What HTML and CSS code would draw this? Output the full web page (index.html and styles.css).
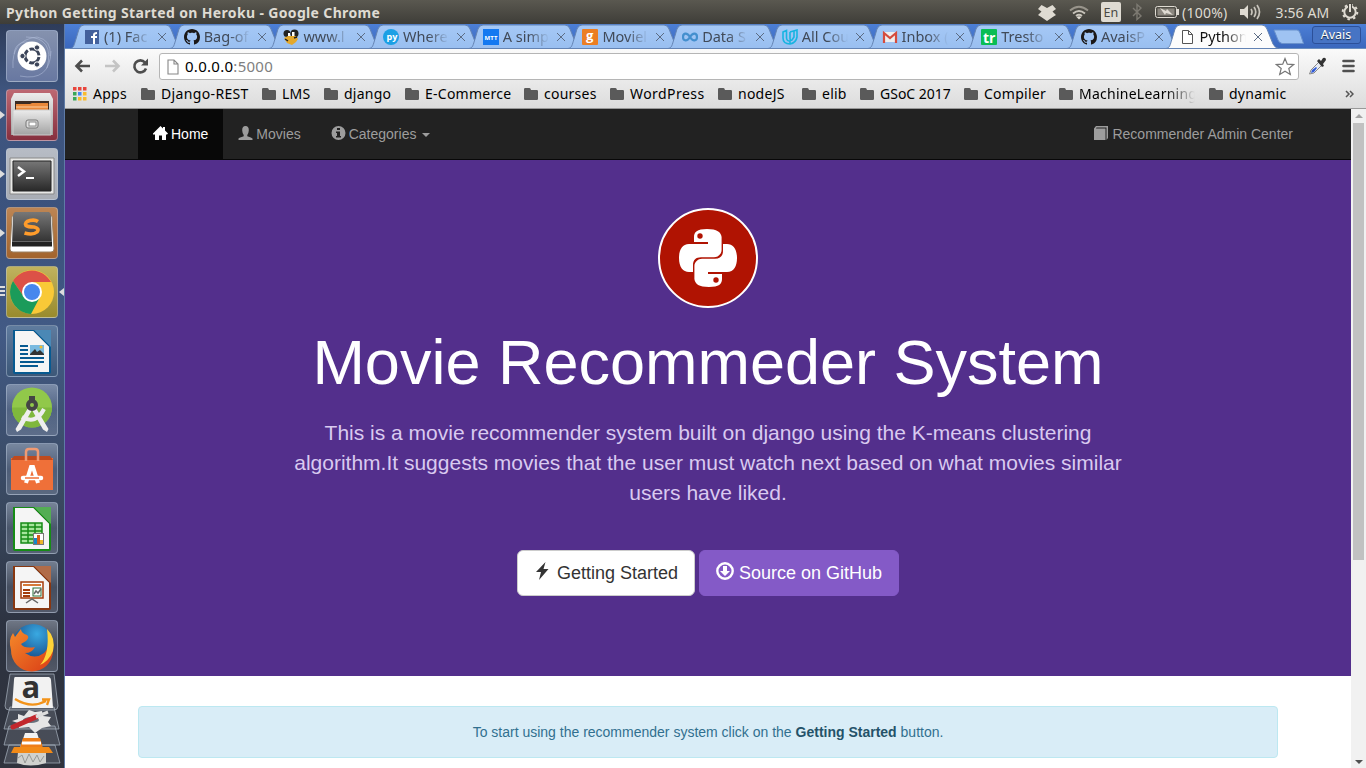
FILE: index.html
```html
<!DOCTYPE html>
<html lang="en">
<head>
<meta charset="utf-8">
<title>Python Getting Started on Heroku</title>
<link rel="stylesheet" href="styles.css">
</head>
<body>
<svg class="defs" width="0" height="0">
  <defs>
    <linearGradient id="tabfill" x2="0" y2="1"><stop offset="0" stop-color="#a5c8f6"/><stop offset="1" stop-color="#99bff0"/></linearGradient>
    <linearGradient id="silver" x2="0" y2="1"><stop offset="0" stop-color="#ececec"/><stop offset="1" stop-color="#a2a2a2"/></linearGradient>
    <linearGradient id="dark" x2="0" y2="1"><stop offset="0" stop-color="#777"/><stop offset="1" stop-color="#292929"/></linearGradient>
    <radialGradient id="globe" cx=".6" cy=".25" r=".8"><stop offset="0" stop-color="#39a9e2"/><stop offset="1" stop-color="#113a78"/></radialGradient>
    <linearGradient id="fox" x2="1" y2="1"><stop offset="0" stop-color="#f58a2a"/><stop offset="1" stop-color="#d93c16"/></linearGradient>
    <symbol id="tabshape" viewBox="0 0 113 25"><path d="M0 24.5 C4 24 4 21 6 15 L9 5 Q10.500 1 14 1 H96 Q99.500 1 101 5 L107 20 Q109 24 113 24.500Z"/></symbol>
    <symbol id="folder" viewBox="0 0 14 12"><path fill="#5a5a5a" d="M0 1.200Q0 0 1.200 0H5.500Q6.500 0 7 2H12.800Q14 2 14 3.200V10.800Q14 12 12.800 12H1.200Q0 12 0 10.800Z"/></symbol>
    <symbol id="github" viewBox="0 0 16 16"><path fill="#1b1817" d="M8 0C3.580 0 0 3.580 0 8c0 3.540 2.290 6.530 5.470 7.590.4.070.55-.17.55-.38 0-.19-.01-.82-.01-1.490-2.010.37-2.530-.49-2.690-.94-.09-.23-.48-.94-.82-1.130-.28-.15-.68-.52-.01-.53.63-.01 1.080.58 1.230.82.720 1.210 1.870.87 2.330.66.070-.52.280-.87.510-1.070-1.780-.2-3.640-.89-3.640-3.950 0-.87.310-1.590.82-2.150-.08-.2-.36-1.020.08-2.120 0 0 .67-.21 2.200.82.640-.18 1.320-.27 2-.27s1.360.09 2 .27c1.530-1.040 2.200-.82 2.200-.82.440 1.100.160 1.920.080 2.120.510.560.820 1.270.820 2.150 0 3.070-1.870 3.750-3.650 3.950.290.250.540.730.540 1.480 0 1.070-.01 1.930-.01 2.200 0 .21.150.46.550.38A8.010 8.010 0 0 0 16 8c0-4.420-3.580-8-8-8z"/></symbol>
    <symbol id="page" viewBox="0 0 12 16"><path fill="#fff" stroke="#888" stroke-width="1.100" d="M1 1H7L11 5V15H1ZM7 1V5H11"/></symbol>
    <symbol id="pysnake" viewBox="0 0 58 58"><path fill="#fff" d="M28 0C18 0 15 3 15 8V13H29V15H10C3 15 0 21 0 29C0 38 4 43 10 43H14V36C14 31 17 28.300 22 28.300H35C39 28.300 42.600 25 42.600 21V8C42 3 38 0 28 0Z"/><circle cx="21" cy="7" r="2.700" fill="#b01302"/></symbol>
  </defs>
</svg>

<header class="panel">
  <span class="panel-title">Python Getting Started on Heroku - Google Chrome</span>
  <svg class="indicators" width="144" height="24" fill="#dfdbd2">
    <path d="M4.500 5 10 8l5.500-3L19 9l-3.500 2.500L19 15l-2.500 1.500L10 21l-6.500-4.500L1 15l3.500-3.500L1 9Z"/>
    <g fill="none" stroke="#c8c4bb" stroke-width="1.800"><path d="M33 10.500Q42 3 51 10.500" stroke="#98948b"/><path d="M36 13.500Q42 8.500 48 13.500M39 16Q42 13.500 45 16"/></g><path d="M42 19.500 39.500 17Q42 15.500 44.500 17Z"/>
    <rect x="64" y="2" width="20" height="20" rx="2"/>
    <path d="M96 8l8 8-4 3.500V4.500L104 8l-8 8" fill="none" stroke="#7d7a72" stroke-width="1.400"/>
    <rect x="118.500" y="6.500" width="21" height="11" rx="2" fill="none" stroke="#dfdbd2"/><rect x="120.500" y="8.500" width="17" height="7" fill="#8b877f"/><path d="M140 9h2v6h-2z"/><path d="M123 8l6 3 1-2 6 6-7-2-1 2Z"/>
    <text x="66.500" y="17" class="lang">En</text>
  </svg>
  <span class="battery">(100%)</span>
  <svg class="volume" width="21" height="16" fill="#dfdbd2"><path d="M0 5H4L8 1V15L4 11H0Z"/><path fill="none" stroke="#c8c4bb" stroke-width="1.700" d="M11 5Q13 8 11 11M14 3Q17.500 8 14 13M17 1Q22 8 17 15"/></svg>
  <span class="clock">3:56 AM</span>
  <svg class="gear" width="18" height="18" viewBox="-9 -9 18 18"><circle r="5.700" fill="none" stroke="#dfdbd2" stroke-width="2"/><circle r="7.300" fill="none" stroke="#dfdbd2" stroke-width="2" stroke-dasharray="2.500 3.230"/><path d="M-2-9H2V0H-2Z" fill="#4a4842"/><path d="M0-8V0" stroke="#dfdbd2" stroke-width="2"/></svg>
</header>

<div class="desktop">
  <aside class="launcher">
    <div class="tile dash"><svg viewBox="0 0 52 52"><g fill="none" stroke="#b8c4df" stroke-opacity=".5"><path d="M7 38Q5 10 31 7Q46 10 44 26M14 46Q44 52 45 21M8 24Q10 7 32 14M20 7Q49 7 41 38"/></g><circle cx="26" cy="26" r="14.500" fill="#fff"/><circle cx="26" cy="26" r="7" fill="none" stroke="#3b4459" stroke-width="3" stroke-dasharray="12.660 2" stroke-dashoffset="-1"/><g fill="#3b4459" stroke="#fff"><circle cx="16.500" cy="26" r="2.700"/><circle cx="31" cy="17.500" r="2.700"/><circle cx="31" cy="34.500" r="2.700"/></g></svg></div>
    <div class="tile files"><i class="run"></i><svg viewBox="0 0 52 52"><path d="M8 4H44L47 10V46H5V10Z" fill="url(#silver)"/><path d="M9 12H43V24H9Z" fill="#3c2b22"/><path d="M10 15H24L26 14H42V24H10Z" fill="#e9883a"/><path d="M10 18H42" stroke="#ffd0a0"/><path d="M7 21H45V46H7Z" fill="url(#silver)" stroke="#ccc"/><rect x="20" y="31" width="12" height="8" rx="2" fill="#ddd" stroke="#777"/><rect x="23" y="33" width="7" height="4" fill="#fff" stroke="#888"/></svg></div>
    <div class="tile term"><i class="run"></i><svg viewBox="0 0 52 52"><path d="M4 10H48V46H4Z" fill="#e8e8e6" stroke="#888"/><path d="M7 13H45V43H7Z" fill="url(#dark)" stroke="#222"/><path d="M12 19 18 23.500 12 28" fill="none" stroke="#fff" stroke-width="2.500"/><path d="M20 30H28" stroke="#fff" stroke-width="2"/></svg></div>
    <div class="tile sublime"><i class="run"></i><svg viewBox="0 0 52 52"><path d="M6 9 4 42Q4 45 7 45H45Q48 45 48 42L46 9Z" fill="#fff" stroke="#9b8163"/><path d="M9 5H43Q45 6 45 9L46 39H6L7 9Q7 6 9 5Z" fill="url(#dark)"/><path d="M6 34.500H46V39.500H6Z" fill="#222"/><path d="M6 34.500H46" stroke="#666"/><path d="M32 14.500Q29 12.500 24 13.500Q18 15 20 18.500Q22 20 28 20Q34 21.500 31 25Q27 28.500 18.500 26" fill="none" stroke="#ff9c2b" stroke-width="3.600"/></svg></div>
    <div class="tile chrome"><i class="run multi"></i><i class="focus"></i><svg viewBox="0 0 52 52"><circle cx="26" cy="26" r="22" fill="#f9c937"/><path d="M7 15A22 22 0 0 1 45 16H26L18 31Z" fill="#dc5147"/><path d="M7 15A22 22 0 0 0 25 48L34 31 26 35 18 31Z" fill="#1b9b5a"/><circle cx="26" cy="26" r="10" fill="#fff"/><circle cx="26" cy="26" r="8" fill="#4787ed"/></svg></div>
    <div class="tile office"><svg viewBox="0 0 52 52"><path d="M7 5H45V47Q45 49 43 49H9Q7 49 7 47Z" fill="#075a91"/><path d="M28 5H45V22Z" fill="#4b88b5"/><path d="M9 6H27L43 22V47H9Z" fill="#f5f5f5"/><path d="M27 6V6L43 22Z" fill="#ccc" stroke="#ccc"/><path d="M14 21H22M14 25H22M14 29H22M14 33H38M14 37H38M14 41H32" stroke="#075a91" stroke-width="2"/><rect x="24" y="20" width="14" height="10" fill="#79bae0"/><path d="M24 29 29 24 31 27 34 25 38 29V30H24Z" fill="#333"/><circle cx="35" cy="22" r="1.500" fill="#f5bd29"/></svg></div>
    <div class="tile"><svg viewBox="0 0 52 52"><circle cx="26" cy="23.500" r="20" fill="#91c84a"/><path d="M6 23.500A20 20 0 0 0 46 23.500Z" fill="#7fb83c"/><path d="M22 24 9.500 45 11 48 15 45.500 26 26M30 24 42.500 45 41 48 37 45.500 26 26" fill="#eee"/><path d="M16 33Q30 41 38 25" fill="none" stroke="#eee" stroke-width="4"/><rect x="23" y="12" width="6" height="7" fill="#444"/><circle cx="26" cy="21" r="4" fill="none" stroke="#444" stroke-width="4"/></svg></div>
    <div class="tile"><svg viewBox="0 0 52 52"><path d="M5 15H47V47H5Z" fill="#ef7039"/><path d="M5 17 8 13H44L47 17Z" fill="#bf4a1e"/><path d="M20 18V9Q20 6 23 6H29Q32 6 32 9V18" fill="none" stroke="#f09a73" stroke-width="2.500"/><path d="M20 40 25 24H27L32 40" fill="none" stroke="#fff" stroke-width="4"/><path d="M17 35H35" stroke="#fff" stroke-width="4.500" stroke-linecap="round"/><path d="M19 35H33" stroke="#ef7039" stroke-width="1.500"/></svg></div>
    <div class="tile"><svg viewBox="0 0 52 52"><path d="M7 5H45V47Q45 49 43 49H9Q7 49 7 47Z" fill="#168b16"/><path d="M28 5H45V22Z" fill="#54ad54"/><path d="M9 6H27L43 22V47H9Z" fill="#f5f5f5"/><path d="M27 6V6L43 22Z" fill="#ccc" stroke="#ccc"/><path d="M15 21H36V41H15Z" fill="#a6e59c" stroke="#168b16" stroke-width="1.500"/><path d="M15 25H36M15 29H36M15 33H36M15 37H36M22 21V41M29 21V41" stroke="#168b16" stroke-width="1.500"/><rect x="27.500" y="31.500" width="10" height="11" fill="#fff" stroke="#777"/><path d="M29.500 42V36" stroke="#1686c8" stroke-width="3"/><path d="M32.500 42V33" stroke="#d45f1c" stroke-width="3"/><path d="M35.500 42V38" stroke="#edb72b" stroke-width="3"/></svg></div>
    <div class="tile"><svg viewBox="0 0 52 52"><path d="M7 5H45V47Q45 49 43 49H9Q7 49 7 47Z" fill="#883711"/><path d="M28 5H45V22Z" fill="#b16c48"/><path d="M9 6H27L43 22V47H9Z" fill="#f5f5f5"/><path d="M27 6V6L43 22Z" fill="#ccc" stroke="#ccc"/><rect x="15" y="21" width="22" height="16" fill="#fff" stroke="#a43c0b" stroke-width="1.500"/><path d="M17 24H35" stroke="#d67a3a" stroke-width="2"/><path d="M17 29H24M17 32H24M17 35H24" stroke="#a43c0b" stroke-width="2"/><rect x="27" y="27" width="8" height="8" fill="#fff" stroke="#286f39"/><path d="M28 33 30 30 32 32 35 28M20 42 26 38 32 42" fill="none" stroke="#666" stroke-width="1.500"/></svg></div>
    <div class="tile"><svg viewBox="0 0 52 52"><circle cx="27" cy="24" r="20" fill="url(#globe)"/><path d="M7 13 9 17 15 9Q15 13 21 15Q24 17 20 21L15 24Q18 29 29 27Q26 33 19 33Q29 40 38 33Q44 28 42 15Q49 24 47 31A21 21 0 0 1 5 30Q2 20 7 13Z" fill="url(#fox)"/><path d="M41 9Q50 18 47 31Q43 41 34 45Q44 34 41 9Z" fill="#ffd338"/></svg></div>
    <svg class="stack" width="65" height="96" viewBox="0 0 65 96"><g fill="#b8c0ce" fill-opacity=".18" stroke="#aab3c0" stroke-opacity=".7"><path d="M10 2H54L58 34Q58 38 54 38H9Q5 38 5 34Z"/><path d="M10 35H54L59 57H4Z"/><path d="M9 54H55L60 73H4Z"/><path d="M9 73H55L60 91H4Z"/></g><path d="M12 49 18 47V42L24 44 29 38 35 40 42 39 43 44 51 45 48 50 51 54 42 56 35 61 29 55 19 56 18 51Z" fill="#e6e6e6"/><ellipse cx="31" cy="48" rx="8" ry="3" fill="#67707b"/><path d="M15 5H49Q51 6 51 8L53 36H12L14 8Q14 5 15 5Z" fill="#f2f2f2"/><text x="21.500" y="26" class="amazon">a</text><path d="M15 27Q31 37 46 29M42 27.500H49L47 33" fill="none" stroke="#f39319" stroke-width="2.300"/><path d="M13 55 36 45" stroke="#c2272d" stroke-width="5" stroke-linecap="round"/><path d="M36 45 48 40" stroke="#ddd" stroke-width="3"/><path d="M25 61H37L42 76H20Z" fill="#f2f2f2"/><path d="M23 66H40L43 76H20Z" fill="#ef7e17"/><path d="M22 71H41" stroke="#fff" stroke-width="3"/><path d="M18 80H46V91Q30 96 17 91Z" fill="#d0d1ce"/><path d="M18 86 22 83 25 91 29 82 33 90 37 83 40 90 44 84" fill="none" stroke="#969996"/><path d="M14 75H49L53 81H11Z" fill="#f28a17"/></svg>
  </aside>

  <main class="window">
    <div class="tabs">
      <div class="tab"><svg class="shape"><use href="#tabshape"/></svg><svg class="fav" viewBox="0 0 16 16"><path fill="#43609c" d="M1 1H15V15H1Z"/><path d="M9 15V9H7V7H9V6Q9 3 13 3V5Q11 5 11 6V7H13V9H11V15Z" fill="#fff"/></svg><span>(1) Fac</span><b></b></div>
      <div class="tab"><svg class="shape"><use href="#tabshape"/></svg><svg class="fav"><use href="#github"/></svg><span>Bag-of</span><b></b></div>
      <div class="tab"><svg class="shape"><use href="#tabshape"/></svg><svg class="fav" viewBox="0 0 16 16"><circle cx="4" cy="4.500" r="3.500" fill="#222"/><circle cx="11.500" cy="4.500" r="4" fill="#222"/><path d="M1 9 5 7H13L15 10 13 13 9 16 4 14Z" fill="#e4a82c"/><path d="M5 4H7V7H5ZM9 3H11.500V7H9Z" fill="#fff"/><path d="M2 10 5 12M11 9 14 8" stroke="#222" stroke-width="1.500"/></svg><span>www.l</span><b></b></div>
      <div class="tab"><svg class="shape"><use href="#tabshape"/></svg><svg class="fav" viewBox="0 0 16 16"><circle cx="8" cy="8" r="8" fill="#1ba0e5"/><text x="3.500" y="10.500" class="favtext" font-size="9">py</text></svg><span>Where</span><b></b></div>
      <div class="tab"><svg class="shape"><use href="#tabshape"/></svg><svg class="fav" viewBox="0 0 16 16"><path d="M0 0H16V16H0Z" fill="#1479f1"/><text x="1.500" y="10.500" class="favtext" font-size="6" textLength="13">MTT</text></svg><span>A simp</span><b></b></div>
      <div class="tab"><svg class="shape"><use href="#tabshape"/></svg><svg class="fav" viewBox="0 0 16 16"><rect width="16" height="16" rx="1" fill="#eb7e23"/><text x="4" y="11" class="favtext" font-size="13">g</text></svg><span>Moviel</span><b></b></div>
      <div class="tab"><svg class="shape"><use href="#tabshape"/></svg><svg class="fav" viewBox="0 0 16 16"><path d="M8 8C5 3 1 4 1 8S5 13 8 8S15 4 15 8S11 13 8 8Z" fill="none" stroke="#448fce" stroke-width="2.200"/></svg><span>Data S</span><b></b></div>
      <div class="tab"><svg class="shape"><use href="#tabshape"/></svg><svg class="fav" viewBox="0 0 16 16"><path d="M1 3 4.500 1.500V9Q5 12.500 8 12V15Q1 15 1 9ZM8 3 15 1V8Q14 14 8 15M8 3V9Q8 12 10 11L12 8V2" fill="none" stroke="#18b4e1" stroke-width="1.600"/></svg><span>All Cou</span><b></b></div>
      <div class="tab"><svg class="shape"><use href="#tabshape"/></svg><svg class="fav" viewBox="0 0 16 16"><path d="M1 3H15V13H1Z" fill="#eee"/><path d="M2 14V4L8 9 14 4V14" fill="none" stroke="#d54b3d" stroke-width="2.200"/></svg><span>Inbox (</span><b></b></div>
      <div class="tab"><svg class="shape"><use href="#tabshape"/></svg><svg class="fav" viewBox="0 0 16 16"><rect width="16" height="16" rx="1" fill="#09bd55"/><text x="2" y="13.500" class="favtext" font-size="14">tr</text></svg><span>Tresto</span><b></b></div>
      <div class="tab"><svg class="shape"><use href="#tabshape"/></svg><svg class="fav"><use href="#github"/></svg><span>AvaisP</span><b></b></div>
      <div class="tab active"><svg class="shape"><use href="#tabshape"/></svg><svg class="fav" viewBox="0 0 16 16"><path fill="#fff" stroke="#555" d="M2.500 1.500H8.500L12.500 5.500V14.500H2.500ZM8.500 1.500V5.500H12.500"/></svg><span>Python</span><b></b></div>
      <svg class="newtab" width="32" height="16"><path d="M1 1H24Q26 1 27 4L30.500 14.500H9Q6 14 5 11Z" fill="#9fc3f2" stroke="#6991cc"/></svg>
      <div class="user">Avais</div>
    </div>

    <div class="toolbar">
      <div class="address-row">
        <svg width="80" height="20" viewBox="0 0 80 20" fill="none" stroke-width="2.600"><path d="M17 10H4M9 4.500 3.500 10 9 15.500" stroke="#4d4d4d"/><path d="M32 10H45M40 4.500 45.500 10 40 15.500" stroke="#c4c4c4"/><path d="M72 6.500A6 6 0 1 0 73 12.500" stroke="#4d4d4d"/><path d="M75 2.500V9.500H68Z" fill="#4d4d4d"/></svg>
        <div class="omnibox"><svg width="12" height="16"><use href="#page"/></svg><span class="url">0.0.0.0<em>:5000</em></span><svg class="star" width="20" height="19" viewBox="0 0 20 19"><path d="M10 1.500 12.300 7.200 18.500 7.600 13.800 11.500 15.300 17.500 10 14.200 4.700 17.500 6.200 11.500 1.500 7.600 7.700 7.200Z" fill="#fff" stroke="#777" stroke-width="1.200"/></svg></div>
        <svg class="dropper" width="19" height="19"><path d="M1.500 17 3 13 11 5 14 8 6 16Z" fill="#e8ecf5" stroke="#888"/><path d="M3 16 4 13 8 10 9 11 6 15Z" fill="#315bd6"/><path d="M9 4 11 2 13 4 15 1Q18 0 18 3L15 7 16 9 14 10Z" fill="#333"/></svg>
        <svg width="13" height="14"><path d="M1.500 2H11.500M1.500 7H11.500M1.500 12H11.500" stroke="#505050" stroke-width="2.600" stroke-linecap="round"/></svg>
      </div>
      <nav class="bookmarks">
        <a class="bm w-apps"><svg width="14" height="14"><path d="M0 0H3.500V3.500H0ZM5 0H8.500V3.500H5ZM10 0H13.500V3.500H10Z" fill="#e8453c"/><path d="M0 5H3.500V8.500H0ZM0 10H3.500V13.500H0Z" fill="#3aa757"/><path d="M5 5H8.500V8.500H5Z" fill="#4688f1"/><path d="M10 5H13.500V8.500H10ZM5 10H8.500V13.500H5ZM10 10H13.500V13.500H10Z" fill="#f9bb2d"/></svg>Apps</a>
        <a class="bm w-rest"><svg><use href="#folder"/></svg>Django-REST</a>
        <a class="bm w-lms"><svg><use href="#folder"/></svg>LMS</a>
        <a class="bm w-django"><svg><use href="#folder"/></svg>django</a>
        <a class="bm w-ecom"><svg><use href="#folder"/></svg>E-Commerce</a>
        <a class="bm w-courses"><svg><use href="#folder"/></svg>courses</a>
        <a class="bm w-wp"><svg><use href="#folder"/></svg>WordPress</a>
        <a class="bm w-node"><svg><use href="#folder"/></svg>nodeJS</a>
        <a class="bm w-elib"><svg><use href="#folder"/></svg>elib</a>
        <a class="bm w-gsoc"><svg><use href="#folder"/></svg>GSoC 2017</a>
        <a class="bm w-comp"><svg><use href="#folder"/></svg>Compiler</a>
        <a class="bm w-ml"><svg><use href="#folder"/></svg><span>MachineLearning</span></a>
        <a class="bm w-dyn"><svg><use href="#folder"/></svg>dynamic</a>
        <svg class="more" width="9" height="8"><path d="M1 1 4 4 1 7M5 1 8 4 5 7" fill="none" stroke="#555" stroke-width="1.500"/></svg>
      </nav>
    </div>

    <div class="viewport">
      <div class="site">
        <nav class="navbar">
          <a class="current"><svg width="15" height="14"><path d="M7.500 0 10 2.500V1H12V4.500L15 7.500 14 8.500H13V14H9V9.500H6V14H2V8.500H0V7.500Z" fill="#fff"/></svg>Home</a>
          <a><svg width="15" height="14"><path d="M7.500 0Q11 0 10.800 4.500Q10.500 8 9.300 9V10.200Q13.700 11.500 14.500 12.500V14H.5V12.500Q1.300 11.500 5.700 10.200V9Q4.500 8 4.200 4.500Q4 0 7.500 0Z"/></svg>Movies</a>
          <a><svg width="15" height="14"><path fill-rule="evenodd" d="M7.500 0A7 7 0 1 0 7.500 14A7 7 0 1 0 7.500 0ZM6 2H9V4H6ZM5 5.500H9V10H10V11.500H5V10H6V7H5Z"/></svg>Categories<i class="caret"></i></a>
          <a class="admin"><svg width="15" height="14"><path d="M0 2.500 2 0H14V12L12.500 14V1.500H2.500L2 2.500H11.500V14H0Z"/></svg>Recommender Admin Center</a>
        </nav>
        <section class="hero">
          <div class="logo"><svg width="58" height="58" viewBox="0 0 58 58"><use href="#pysnake"/><g transform="rotate(180 29 29)"><use href="#pysnake"/></g></svg></div>
          <h1>Movie Recommeder System</h1>
          <p>This is a movie recommender system built on django using the K-means clustering algorithm.It suggests movies that the user must watch next based on what movies similar users have liked.</p>
          <div class="actions">
            <a class="btn light"><svg width="18" height="18"><path d="M11.500 0 2 10H7L5 18 14.500 7H9.500Z" fill="#333"/></svg>Getting Started</a>
            <a class="btn purple"><svg width="18" height="18"><circle cx="9" cy="9" r="7.700" fill="none" stroke="#fff" stroke-width="2.400"/><path d="M7 4H11V9H14L9 14 4 9H7Z" fill="#fff"/></svg>Source on GitHub</a>
          </div>
        </section>
        <div class="notice">To start using the recommender system click on the <strong>Getting Started</strong> button.</div>
      </div>
      <div class="scrollbar"><i class="up"></i><div class="thumb"></div><i class="down"></i></div>
    </div>
  </main>
</div>
</body>
</html>
```
FILE: styles.css
```css
* { box-sizing: border-box; }
body { margin: 0; width: 1366px; height: 768px; overflow: hidden; font-family: "Noto Sans", sans-serif; background: #fff; }
.defs { position: absolute; }
svg { flex: none; display: block; }

.panel { height: 24px; display: flex; align-items: center; padding: 0 7px 0 6px; background: linear-gradient(#5a5850, #3e3d38); color: #dfdbd2; font-size: 14px; white-space: nowrap; }
.panel-title { font-weight: bold; font-size: 14px; letter-spacing: .35px; width: 1031px; flex: none; }
.indicators { margin-right: 1px; }
.lang { font-size: 12.500px; fill: #4a4842; }
.battery { width: 58px; letter-spacing: .25px; }
.volume { margin-right: 15px; }
.clock { width: 66px; letter-spacing: .1px; }

.desktop { display: flex; height: 744px; }
.launcher { width: 65px; flex: none; display: flex; flex-direction: column; align-items: flex-start; gap: 7px; padding: 6px 0 0 6px; background: linear-gradient(#2e3c5a 0, #3f5680 70px, #3b527d 200px, #425a85 310px, #39485f 480px, #2d3341 600px, #30333d 744px); border-right: 1px solid #5f7ba6; overflow: hidden; }
.tile { position: relative; width: 52px; height: 52px; flex: none; border-radius: 4px; border: 1px solid rgba(190,205,225,.45); background: linear-gradient(rgba(210,220,235,.4), rgba(190,200,220,.15) 50%, rgba(190,200,220,.25)); }
.tile svg { width: 52px; height: 52px; margin: -1px; }
.tile.dash { background: linear-gradient(#8592ae, #6878a1); }
.tile.files { background: linear-gradient(#bd6872, #862f3e); }
.tile.term { background: linear-gradient(#b7bcc5, #a9adb4); }
.tile.sublime { background: linear-gradient(#bd8554, #a3642d); }
.tile.chrome { background: linear-gradient(#c0b35e, #998b2d); }
.tile.office { background: linear-gradient(#5f7b9e, #3c5778); }
.run, .focus { position: absolute; width: 0; height: 0; border: 4px solid transparent; top: 21px; }
.run { left: -7px; border-left: 5px solid #ddd; border-right: 0; }
.run.multi { border: 0; width: 5px; height: 12px; top: 19px; background: repeating-linear-gradient(#ddd 0 2px, transparent 2px 4px); }
.focus { right: -7px; border-right: 5px solid #ddd; border-left: 0; }
.stack { margin: -7px 0 0 -6px; }
.amazon { font: bold 31px "Open Sans", sans-serif; fill: #333; }

.window { width: 1301px; display: flex; flex-direction: column; }
.tabs { height: 25px; display: flex; background: linear-gradient(#4c7fd6, #3b68bd); padding-left: 19px; border-bottom: 1px solid #6b8fc0; }
.tab { position: relative; display: flex; align-items: center; width: 99.700px; flex: none; color: #414a58; font-size: 14.500px; }
.tab .shape { position: absolute; left: -14px; top: 0; width: 113px; height: 25px; fill: url(#tabfill); stroke: #6484b4; stroke-width: 1; }
.tab .fav { position: relative; width: 16px; height: 16px; margin-top: 1px; }
.tab span { position: relative; width: 46px; margin-left: 4px; overflow: hidden; white-space: nowrap; -webkit-mask-image: linear-gradient(90deg, #000 55%, transparent); mask-image: linear-gradient(90deg, #000 55%, transparent); }
.tab b { position: relative; width: 8px; height: 8px; margin: 1px 0 0 8px; background: linear-gradient(45deg, transparent 44%, #5c6c84 44% 56%, transparent 56%), linear-gradient(-45deg, transparent 44%, #5c6c84 44% 56%, transparent 56%); }
.tab.active { color: #111; width: 92px; left: -1px; }
.tab.active .shape { fill: #fcfcfc; }
.favtext { font-family: "Open Sans", sans-serif; font-weight: bold; fill: #fff; }
.newtab { margin-top: 5px; }
.user { width: 49px; height: 18px; margin: 2px 0 0 7px; border: 1px solid #2c5099; border-radius: 3px; background: #4774c4; color: #fff; font-size: 12.500px; line-height: 16px; text-align: center; text-shadow: 0 1px 1px #123; }

.toolbar { height: 60px; flex: none; background: linear-gradient(#fafafa, #dcdcdc); border-bottom: 1px solid #999; }
.address-row { height: 32px; display: flex; align-items: center; padding: 2px 10px 0 8px; }
.omnibox { width: 1140px; height: 27px; margin: 1px 0 0 6px; display: flex; align-items: center; padding: 0 3px 0 7px; background: #fff; border: 1px solid #b5b5b5; border-radius: 3px; }
.url { margin: -1px 0 0 6px; font-size: 15px; letter-spacing: .28px; color: #000; }
.url em { font-style: normal; color: #808080; }
.star { margin-left: auto; }
.dropper { margin: 0 15px 0 9px; }
.bookmarks { height: 25px; display: flex; align-items: center; padding-left: 8px; font-size: 14px; letter-spacing: .25px; color: #000; }
.bm { display: flex; align-items: center; flex: none; white-space: nowrap; }
.bm svg { width: 14px; height: 12px; margin-right: 6px; }
.bm.w-apps svg { height: 14px; }
.w-apps { width: 68px; } .w-rest { width: 121px; letter-spacing: .35px; } .w-lms { width: 62px; } .w-django { width: 81px; } .w-ecom { width: 119px; } .w-courses { width: 86px; } .w-wp { width: 108px; letter-spacing: .45px; } .w-node { width: 84px; } .w-elib { width: 58px; } .w-gsoc { width: 104px; letter-spacing: 0; } .w-comp { width: 95px; } .w-ml { width: 150px; } .w-dyn { width: 136px; }
.w-ml span { width: 116px; overflow: hidden; -webkit-mask-image: linear-gradient(90deg, #000 75%, transparent); mask-image: linear-gradient(90deg, #000 75%, transparent); }

.viewport { flex: 1; min-height: 0; display: flex; font-family: "Liberation Sans", Arial, sans-serif; }
.site { width: 1286px; background: #fff; }
.navbar { height: 51px; display: flex; padding: 0 43px 0 73px; background: #222; border-bottom: 1px solid #080808; color: #9d9d9d; font-size: 14px; }
.navbar a { display: flex; align-items: center; padding: 0 15px; white-space: nowrap; }
.navbar svg { fill: #9d9d9d; margin: -2px 3px 0 0; }
.navbar .current { background: #080808; color: #fff; }
.navbar .admin { margin-left: auto; }
.caret { border: 4px solid transparent; border-top-color: #9d9d9d; border-bottom: 0; margin: 2px 0 0 6px; }
.hero { height: 516px; padding-top: 48px; background: #532f8c; text-align: center; }
.logo { width: 100px; height: 100px; margin: 0 auto; display: flex; align-items: center; justify-content: center; border: 2px solid #fff; border-radius: 50%; background: #b01302; }
.hero h1 { margin: 19px 0 21px; font-size: 63px; font-weight: normal; line-height: 70px; color: #fff; }
.hero p { width: 850px; margin: 0 auto 42px; font-size: 21px; line-height: 30px; color: #d9caf0; }
.actions { display: flex; justify-content: center; gap: 4px; }
.btn { height: 46px; display: flex; align-items: center; padding: 0 16px; border: 1px solid #ccc; border-radius: 6px; font-size: 18px; }
.btn svg { margin: -4px 5px 0 0; }
.light { background: #fff; color: #333; }
.purple { background: #845ac7; border-color: #845ac7; color: #fff; }
.notice { margin: 30px 73px 0; height: 52px; border: 1px solid #bce8f1; border-radius: 4px; background: #d9edf7; color: #31708f; font-size: 14px; line-height: 50px; text-align: center; }
.notice strong { color: #245269; }
.scrollbar { width: 15px; display: flex; flex-direction: column; align-items: center; background: #f1f1f1; padding: 5px 0 4px; }
.up, .down { border: 4px solid transparent; }
.up { border-bottom-color: #a3a3a3; border-top: 0; }
.down { border-top-color: #505050; border-bottom: 0; margin-top: auto; }
.thumb { width: 11px; height: 437px; margin-top: 5px; background: #c1c1c1; }
```
